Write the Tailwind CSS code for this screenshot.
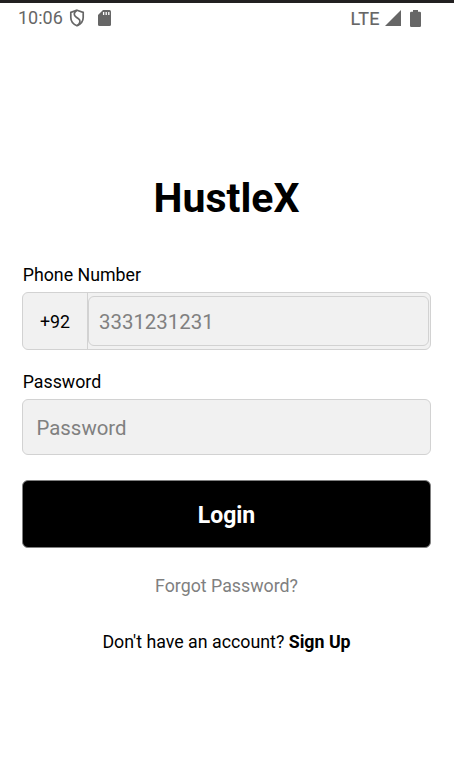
<!DOCTYPE html>
<html lang="en">
<head>
<meta charset="utf-8">
<title>HustleX</title>
<script src="https://cdn.jsdelivr.net/npm/@tailwindcss/browser@4"></script>
</head>
<body class="flex h-[784px] w-[454px] flex-col overflow-hidden border-t-3 border-[#222021] bg-white font-[Roboto,sans-serif] text-black">
  <header class="flex h-[30px] items-center pr-[33px] pl-[18px] text-[#666]">
    <span class="w-[45px] text-[18px] leading-[30px]">10:06</span>
    <svg class="ml-[6px] h-[18px] w-[16px]" viewBox="0 0 16 18" fill="none" stroke="currentColor" stroke-width="1.7"><path d="M8 1.200 14.200 3.400V8.500C14.200 12.200 11.500 15.300 8 16.800 4.500 15.300 1.800 12.200 1.800 8.500V3.400Z"/><path d="M7.500 1.500C4.500 4 4.500 6.300 7.300 8.200L9.500 9.700C11.800 11.300 11.400 14 8.500 16.500"/></svg>
    <svg class="ml-[13px] h-[16px] w-[14px]" viewBox="0 0 14 16"><path fill="currentColor" d="M5 0H11.500Q13 0 13 1.500V14.500Q13 16 11.500 16H1.500Q0 16 0 14.500V5Z"/><path stroke="#fff" stroke-width="1.300" d="M5.600 2V5M8.200 2V5M10.800 2V5"/></svg>
    <span class="ml-auto pt-px text-[18px] leading-[30px] tracking-[0.4px] [-webkit-text-stroke:0.2px_#666]">LTE</span>
    <svg class="ml-[5px] h-[16px] w-[16px]" viewBox="0 0 16 16"><path fill="currentColor" d="M0 16 16 0V16Z"/></svg>
    <svg class="ml-[9px] h-[17px] w-[11px]" viewBox="0 0 11 17"><path fill="currentColor" d="M3 0H8V1.700H9.800Q11 1.700 11 2.900V15.800Q11 17 9.800 17H1.200Q0 17 0 15.800V2.900Q0 1.700 1.200 1.700H3Z"/></svg>
  </header>
  <main class="flex flex-col pr-[23px] pl-[22px] pt-[138px]">
    <h1 class="text-center text-[41px] leading-[54px] font-bold">HustleX</h1>
    <label class="mt-[38px] pl-[0.700px] text-[17.800px] leading-[24px]">Phone Number</label>
    <div class="mt-[5px] flex h-[58px] rounded-[6px] border-[1.5px] border-[#d2d2d2] bg-[#f1f1f1]">
      <div class="flex w-[65px] items-center justify-center border-r border-[#d2d2d2] pt-[2px] text-[17.800px]">+92</div>
      <div class="mt-[3px] mb-[3px] mr-px flex flex-1 items-center rounded-[6px] border border-[#d2d2d2] pt-[3px] pl-[10px] text-[20.400px] text-[#808080]">3331231231</div>
    </div>
    <label class="mt-[20px] pl-[0.700px] text-[17.800px] leading-[24px]">Password</label>
    <div class="mt-[5px] flex h-[56px] items-center rounded-[6px] border-[1.5px] border-[#d2d2d2] bg-[#f1f1f1] pt-[2px] pl-[13.500px] text-[20.400px] text-[#808080]">Password</div>
    <button class="mt-[25px] flex h-[68px] items-center justify-center rounded-[6px] border border-[#808080] bg-black pt-[4px] text-[23px] font-bold text-white">Login</button>
    <a class="mt-[26px] text-center text-[17.800px] leading-[24px] text-[#808080]">Forgot Password?</a>
    <p class="mt-[32px] text-center text-[17.800px] leading-[24px]">Don't have an account? <b>Sign Up</b></p>
  </main>
</body>
</html>
